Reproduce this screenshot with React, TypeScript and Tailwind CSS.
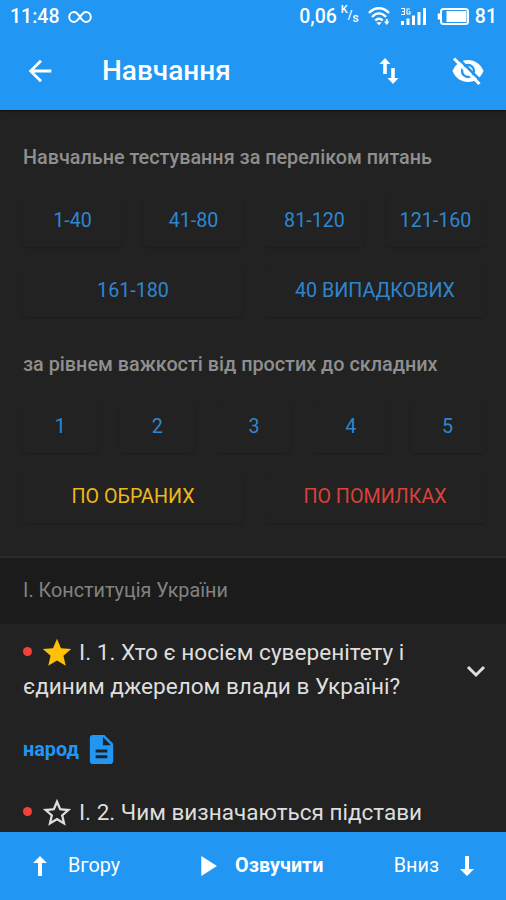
import * as React from 'react';
import { MdArrowBack, MdDescription, MdPlayArrow, MdStar, MdStarBorder } from 'react-icons/md';
import clsx from 'clsx';

const ranges = ['1-40', '41-80', '81-120', '121-160'];
const levels = ['1', '2', '3', '4', '5'];

interface TestButtonProps {
	label: string;
	className?: string;
}

const TestButton = (props: TestButtonProps) => (
	<button
		className={clsx(
			'flex-1 h-[51px] pb-px rounded-sm text-[19.7px] whitespace-nowrap shadow-[0_1px_2px_rgba(0,0,0,0.2)]',
			props.className || 'text-[#2f86cf]'
		)}
	>
		{props.label}
	</button>
);

const StatusBar = () => (
	<div className="flex items-center h-[33px] pl-[10px] pr-[9px] text-white text-[19.5px] font-medium leading-none">
		<span>11:48</span>
		<svg className="ml-[9px]" width="24" height="14" viewBox="0 0 24 14" fill="none" stroke="currentColor" strokeWidth="2">
			<path d="M12 7C9.8 3.8 8.4 2 6.2 2a5 5 0 0 0 0 10C8.4 12 9.8 10.2 12 7s3.600-5 5.800-5a5 5 0 0 1 0 10C15.600 12 14.200 10.200 12 7z" />
		</svg>
		<span className="ml-auto">0,06</span>
		<span className="flex ml-1 w-[18px] text-[12px] leading-none">
			<span className="-mt-[5px] text-[11px]">K</span>
			<span>/</span>
			<span className="mt-[3px]">s</span>
		</span>
		<svg className="ml-[9px]" width="23" height="19" viewBox="0 0 23 19" fill="none" stroke="currentColor" strokeWidth="2.400">
			<path d="M1 6C7-.3 15-.3 21 6M4 10c4.500-4.800 9.500-4.800 14 0M7.300 13.500c2.500-2.500 4.900-2.500 7.400 0" />
			<path d="M8.300 15.200h5.400L11 18.200z" fill="currentColor" stroke="none" />
			<path d="M16 14.500h5.500l-2.750 3.500zM17.900 12h1.800v3h-1.800z" fill="currentColor" stroke="none" />
		</svg>
		<svg className="ml-[9px]" width="28" height="19" viewBox="0 0 28 19" fill="currentColor">
			<path d="M1 14h3v4H1zM6.500 11.500h3V18h-3zM12 8.500h3V18h-3zM17.500 5h3v13h-3zM23 1h3v17h-3z" />
			<path d="M1 1.500h3.500v6H1M2 4.500h2.500M10 2H7v5h3V4.800H8.500" fill="none" stroke="currentColor" strokeWidth="1.100" />
		</svg>
		<svg className="ml-[8px]" width="34" height="19" viewBox="0 0 34 19" fill="none">
			<rect x="5" y="2" width="27" height="15" rx="2.500" stroke="currentColor" strokeWidth="2" />
			<path d="M3 6.500v6" stroke="currentColor" strokeWidth="2.600" />
			<path d="M10.500 4h20v11h-20z" fill="currentColor" />
		</svg>
		<span className="ml-[5px]">81</span>
	</div>
);

const Header = () => (
	<div className="flex items-center h-[76px] pl-[23px] pr-[22px] text-white">
		<MdArrowBack size={34} />
		<h1 className="ml-[45px] text-[28px] font-medium leading-none">Навчання</h1>
		<svg className="ml-auto" width="20" height="26" viewBox="0 0 20 26" fill="currentColor">
			<path d="M6 0 11.500 6H7.800v10H4.200V6H.5zM14 26l-5.500-6h3.700V10h3.600v10h3.700z" />
		</svg>
		<svg className="ml-[53px]" width="32" height="28" viewBox="0 0 32 28" fill="none">
			<path d="M.5 14C3.500 7 9 3 16 3s12.500 4 15.500 11C28.500 21 23 25 16 25S3.500 21 .5 14z" fill="currentColor" />
			<circle cx="16" cy="14" r="6" stroke="#2196f3" strokeWidth="2.400" />
			<path d="m4.500 -.5 25 25" stroke="#2196f3" strokeWidth="2.600" />
			<path d="m2 1.500 25.500 25.500" stroke="currentColor" strokeWidth="3" />
		</svg>
	</div>
);

const Arrow = (props: { className?: string }) => (
	<svg className={props.className} width="14" height="20" viewBox="0 0 14 20" fill="currentColor">
		<path d="M7 0 14 7H9v13H5V7H0z" />
	</svg>
);

const Dot = () => <span className="size-[9px] mb-[3px] rounded-full bg-[#f44336]" />;

export default function App() {
	return (
		<div
			className="flex flex-col w-full h-[900px] overflow-hidden bg-[#222222]"
			style={{ fontFamily: 'Roboto, "Noto Sans", sans-serif' }}
		>
			<div className="shrink-0 h-[110px] bg-[#2196f3] shadow-[0_1px_2px_rgba(0,0,0,0.6)]">
				<StatusBar />
				<Header />
			</div>

			<div className="flex-1 min-h-0 overflow-hidden">
				<div className="h-[448px] pl-[23px] pr-[21px] pt-[34px] border-b-2 border-[#2b2b2b]">
					<h2 className="h-[52px] text-[19.8px] leading-7 font-medium text-[#8f8f8f] whitespace-nowrap">
						Навчальне тестування за переліком питань
					</h2>
					<div className="flex gap-[22px]">
						{ranges.map((range) => (
							<TestButton key={range} label={range} />
						))}
					</div>
					<div className="flex gap-[22px] pt-[19px]">
						<TestButton label="161-180" />
						<TestButton label="40 ВИПАДКОВИХ" />
					</div>
					<h2 className="h-[85px] pt-[34px] text-[19.8px] leading-7 font-medium text-[#8f8f8f] whitespace-nowrap">
						за рівнем важкості від простих до складних
					</h2>
					<div className="flex gap-[22px]">
						{levels.map((level) => (
							<TestButton key={level} label={level} />
						))}
					</div>
					<div className="flex gap-[22px] pt-[19px]">
						<TestButton label="ПО ОБРАНИХ" className="text-[#eeb71c]" />
						<TestButton label="ПО ПОМИЛКАХ" className="text-[#d84339]" />
					</div>
				</div>

				<div className="flex items-center h-[66px] px-[23px] bg-[#1b1b1b] text-[19.8px] text-[#828282]">
					I. Конституція України
				</div>

				<div className="flex items-center justify-between h-[94px] pl-[23px] pr-[15px] text-[22.6px] leading-[34px] text-[#dedede]">
					<div className="mb-[2px] whitespace-nowrap">
						<div className="flex items-center">
							<Dot />
							<MdStar className="ml-2 text-[#ffc107]" size={34} />
							<span className="ml-[5px]">I. 1. Хто є носієм суверенітету і</span>
						</div>
						<div>єдиним джерелом влади в Україні?</div>
					</div>
					<svg width="30" height="30" viewBox="0 0 30 30" fill="none" stroke="currentColor" strokeWidth="3">
						<path d="m7 11 8 8 8-8" />
					</svg>
				</div>

				<div className="flex items-center h-[62px] px-[23px] text-[#2196f3]">
					<span className="pt-px text-[19.8px] font-bold">народ</span>
					<MdDescription className="ml-[5px]" size={35} />
				</div>

				<div className="flex items-center h-[66px] px-[23px] text-[22.5px] text-[#dedede] whitespace-nowrap">
					<Dot />
					<MdStarBorder className="ml-2" size={34} />
					<span className="ml-[5px]">I. 2. Чим визначаються підстави</span>
				</div>
			</div>

			<div className="flex items-center shrink-0 h-[68px] pl-[33px] pr-8 bg-[#2196f3] text-white text-[19.8px]">
				<Arrow />
				<span className="ml-[21px]">Вгору</span>
				<MdPlayArrow className="ml-[70px]" size={34} />
				<span className="ml-[11px] font-bold">Озвучити</span>
				<span className="ml-auto">Вниз</span>
				<Arrow className="ml-[21px] rotate-180" />
			</div>
		</div>
	);
}
